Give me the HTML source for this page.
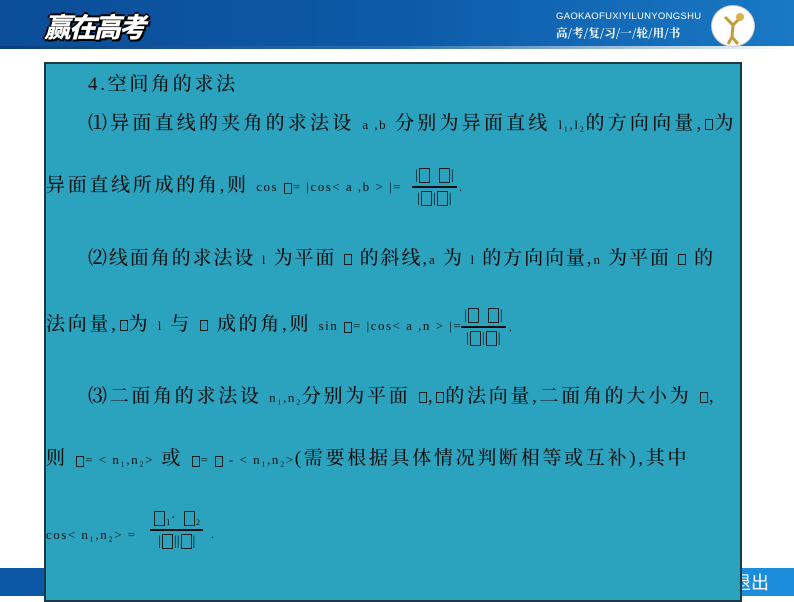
<!DOCTYPE html>
<html><head><meta charset="utf-8">
<style>
*{margin:0;padding:0;box-sizing:border-box}
body{width:794px;height:596px;position:relative;overflow:hidden;background:#fff;font-family:"Liberation Serif","Noto Serif CJK SC",serif;}
.hdr{position:absolute;left:0;top:0;width:794px;height:46px;background:linear-gradient(90deg,#0b4d98 0%,#0c5aa8 50%,#1a78c4 100%);}
.hline{position:absolute;left:0;top:46px;width:794px;height:3px;background:linear-gradient(90deg,#0a3f7c 0%,#2a6fb0 50%,#ffffff 100%);}
.logo{position:absolute;left:44px;top:6px;font-family:"Noto Sans CJK SC",sans-serif;font-weight:900;font-style:italic;font-size:27px;color:#fff;letter-spacing:-2px;text-shadow:-2px 0 #000,2px 0 #000,0 -2px #000,0 2px #000,2px 2px #000;}
.en{position:absolute;left:556px;top:11px;font-family:"Liberation Sans",sans-serif;font-size:9.5px;color:#fff;letter-spacing:0.3px}
.cn{position:absolute;left:556px;top:25px;font-family:"Noto Serif CJK SC",serif;font-size:11.5px;color:#fff;font-weight:bold}
.med{position:absolute;left:711px;top:5px;width:44px;height:42px;border-radius:50%;background:#fff;border:1px solid #ccc}
.box{position:absolute;left:44px;top:62px;width:698px;height:540px;background:#2ba3bf;border:2px solid #1c3a44;z-index:2}
.foot{position:absolute;left:0;top:568px;width:794px;height:28px;background:#0c57a6}
.foot2{position:absolute;left:741px;top:568px;width:53px;height:28px;background:#1b8ddb;overflow:hidden}
.foot2 span{position:absolute;left:-8px;top:0;color:#fff;font-family:"Noto Sans CJK SC",sans-serif;font-size:18px;line-height:28px}
.l{position:absolute;z-index:3;white-space:nowrap;color:#111;font-family:"Liberation Serif","Noto Serif CJK SC",serif;font-size:19px;font-weight:500;letter-spacing:2.7px;line-height:24px}
.s{font-family:"Liberation Serif",serif;font-size:13px;letter-spacing:1.5px;font-weight:normal}
.b{display:inline-block;width:8px;height:11px;border:1px solid #222;vertical-align:middle;margin:0 1px}
.fr{position:absolute;z-index:3;text-align:center;color:#111;font-family:"Liberation Serif",serif}
.fr .n{border-bottom:2px solid #111;padding:0 3px;font-size:14px;line-height:21px;height:23px}
.fr .d{font-size:14px;line-height:21px}
.bb{display:inline-block;width:11px;height:15px;border:1.5px solid #222;vertical-align:middle;margin:0 1px}
.dot{position:absolute;z-index:3;font-size:12px;color:#111}
</style></head><body>
<div class="hdr"></div><div class="hline"></div>
<div class="logo">赢在高考</div>
<div class="en">GAOKAOFUXIYILUNYONGSHU</div>
<div class="cn">高/考/复/习/一/轮/用/书</div>
<div class="med"><svg width="44" height="42"><path d="M13 11 L21 19 L27 13 M21 19 L20 31 M20 31 L16 38 M20 31 L26 38" stroke="#c49a3a" stroke-width="3" fill="none"/><circle cx="28" cy="11" r="4" fill="#d8b04a"/></svg></div>
<div class="foot"></div><div class="foot2"><span>退出</span></div>
<div class="box"></div>

<div class="l" style="left:88px;top:73px">4.空间角的求法</div>
<div class="l" style="left:88px;top:112px;letter-spacing:3.2px">⑴异面直线的夹角的求法设 <span class="s">a ,b</span> 分别为异面直线 <span class="s">l₁,l₂</span>的方向向量,<span class="b"></span>为</div>
<div class="l" style="left:46px;top:174px">异面直线所成的角,则 <span class="s">cos <span class="b"></span>= |cos&lt; a ,b &gt; |=</span></div>
<div class="fr" style="left:412px;top:165px"><div class="n">|<span class="bb"></span> &nbsp;<span class="bb"></span>|</div><div class="d">|<span class="bb"></span>|<span class="bb"></span>|</div></div>
<div class="dot" style="left:459px;top:180px">.</div>

<div class="l" style="left:88px;top:247px;letter-spacing:1.9px">⑵线面角的求法设 <span class="s">l</span> 为平面 <span class="b"></span> 的斜线,<span class="s">a</span> 为 <span class="s">l</span> 的方向向量,<span class="s">n</span> 为平面 <span class="b"></span> 的</div>
<div class="l" style="left:46px;top:313px">法向量,<span class="b"></span>为 <span class="s">l</span> 与 <span class="b"></span> 成的角,则 <span class="s">sin <span class="b"></span>= |cos&lt; a ,n &gt; |=</span></div>
<div class="fr" style="left:461px;top:305px"><div class="n">|<span class="bb"></span> &nbsp;<span class="bb"></span>|</div><div class="d">|<span class="bb"></span>|<span class="bb"></span>|</div></div>
<div class="dot" style="left:509px;top:320px">.</div>

<div class="l" style="left:88px;top:385px">⑶二面角的求法设 <span class="s">n₁,n₂</span>分别为平面 <span class="b"></span>,<span class="b"></span>的法向量,二面角的大小为 <span class="b"></span>,</div>
<div class="l" style="left:46px;top:447px">则 <span class="s"><span class="b"></span>= &lt; n₁,n₂&gt;</span> 或 <span class="s"><span class="b"></span>= <span class="b"></span> - &lt; n₁,n₂&gt;</span>(需要根据具体情况判断相等或互补),其中</div>
<div class="l" style="left:46px;top:522px"><span class="s">cos&lt; n₁,n₂&gt; =</span></div>
<div class="fr" style="left:150px;top:508px"><div class="n"><span class="bb"></span>₁· &nbsp;<span class="bb"></span>₂</div><div class="d">|<span class="bb"></span>||<span class="bb"></span>|</div></div>
<div class="dot" style="left:211px;top:527px">.</div>
</body></html>
